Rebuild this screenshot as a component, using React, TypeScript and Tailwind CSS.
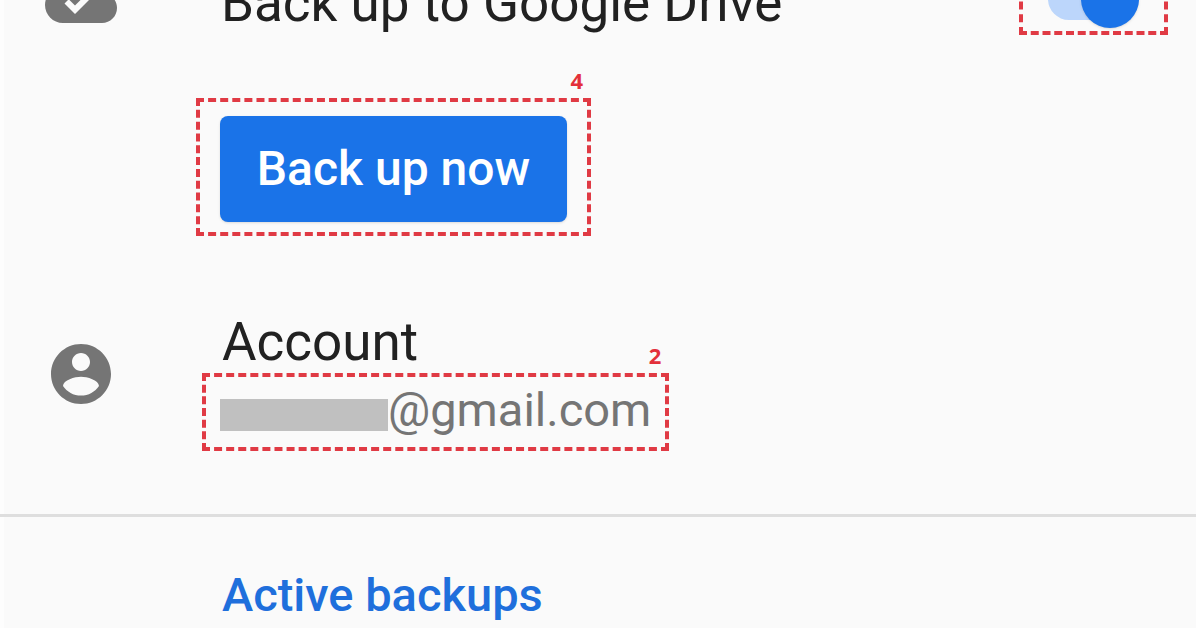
import { useState, type ReactNode } from 'react';

type CalloutProps = { label?: string; className: string; children: ReactNode };

function Callout({ label, className, children }: CalloutProps) {
  return (
    <div className={`relative w-fit border-4 border-dashed border-[#e03a44] ${className}`}>
      {label && (
        <span className="absolute -top-[38px] right-0 px-1 font-['Open_Sans',sans-serif] text-[22px] leading-8 font-bold text-[#e3303a]">
          {label}
        </span>
      )}
      {children}
    </div>
  );
}

function CloudDoneIcon() {
  return (
    <svg viewBox="0 0 24 24" className="size-[72px] fill-[#757575]" aria-hidden="true">
      <path d="M19.35 10.04C18.67 6.59 15.64 4 12 4 9.11 4 6.6 5.64 5.35 8.04 2.34 8.36 0 10.91 0 14c0 3.31 2.69 6 6 6h13c2.76 0 5-2.24 5-5 0-2.64-2.05-4.78-4.65-4.96zM10 17l-3.5-3.5 1.41-1.41L10 14.17 15.18 9l1.41 1.41L10 17z" />
    </svg>
  );
}

function AccountIcon() {
  return (
    <svg viewBox="0 0 24 24" className="size-[72px] fill-[#757575]" aria-hidden="true">
      <path d="M12 2C6.48 2 2 6.48 2 12s4.48 10 10 10 10-4.48 10-10S17.52 2 12 2zm0 3c1.66 0 3 1.34 3 3s-1.34 3-3 3-3-1.34-3-3 1.34-3 3-3zm0 14.2c-2.5 0-4.71-1.28-6-3.22.03-1.99 4-3.08 6-3.08 1.99 0 5.97 1.09 6 3.08-1.29 1.94-3.5 3.22-6 3.22z" />
    </svg>
  );
}

export default function App() {
  const [enabled, setEnabled] = useState(true);

  return (
    <main className="min-h-screen overflow-hidden bg-[#fafafa] font-[Roboto,sans-serif] text-[#212121] shadow-[inset_4px_0_0_#fdfdfd]">
      <section className="-mt-[37px] flex h-[72px] items-center pr-7">
        <div className="w-[221px] shrink-0 pl-[45px]">
          <CloudDoneIcon />
        </div>
        <label htmlFor="drive-backup" className="grow pt-2 text-[53px] leading-[60px] whitespace-nowrap">
          Back up to Google Drive
        </label>
        <Callout className="flex h-[72px] items-center px-[25px]">
          <input
            id="drive-backup"
            type="checkbox"
            role="switch"
            checked={enabled}
            onChange={() => setEnabled(!enabled)}
            className="peer absolute inset-0 z-10 size-full cursor-pointer opacity-0"
          />
          <span className="flex h-[42px] w-[91px] items-center rounded-full bg-[#bcd6fb] peer-checked:justify-end">
            <span className="size-[58px] rounded-full bg-[#1a73e8] shadow-sm" />
          </span>
        </Callout>
      </section>

      <section className="mt-[63px] pl-[196px]">
        <Callout label="4" className="px-5 pt-3.5 pb-2.5">
          <button
            type="button"
            className="block h-[106px] w-[347px] cursor-pointer rounded-lg bg-[#1a73e8] text-[48px] leading-[60px] font-medium whitespace-nowrap text-white shadow-sm"
          >
            Back up now
          </button>
        </Callout>
      </section>

      <section className="mt-[76px] flex items-start">
        <div className="w-[202px] shrink-0 pt-[26px] pl-[45px]">
          <AccountIcon />
        </div>
        <div>
          <h2 className="pl-5 text-[53px] leading-[60px]">Account</h2>
          <Callout label="2" className="mt-px flex h-[78px] items-center px-3.5">
            <span className="mt-1.5 h-8 w-[168px] bg-[#c0c0c0]" />
            <span className="pb-1 text-[47px] leading-[60px] text-[#757575]">@gmail.com</span>
          </Callout>
        </div>
      </section>

      <section className="mt-[63px] border-t-3 border-[#dedede] pt-12 pl-[222px]">
        <h2 className="text-[47px] leading-[60px] font-medium text-[#1f6fdc]">Active backups</h2>
      </section>
    </main>
  );
}
